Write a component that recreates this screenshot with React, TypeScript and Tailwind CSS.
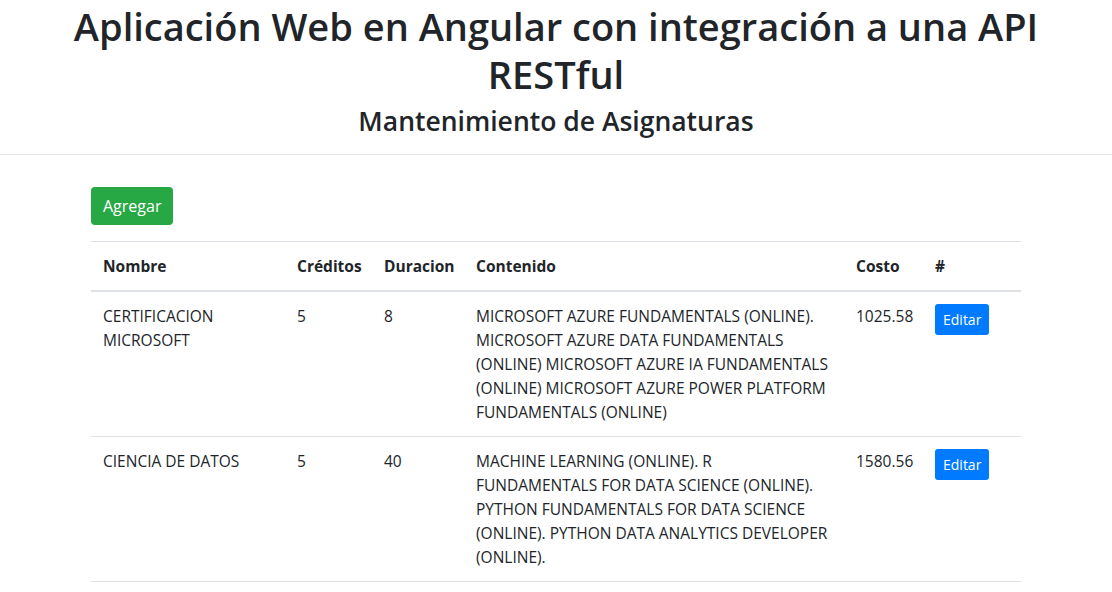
const rows = [
  {
    nombre: "CERTIFICACION MICROSOFT",
    creditos: 5,
    duracion: 8,
    contenido:
      "MICROSOFT AZURE FUNDAMENTALS (ONLINE). MICROSOFT AZURE DATA FUNDAMENTALS (ONLINE) MICROSOFT AZURE IA FUNDAMENTALS (ONLINE) MICROSOFT AZURE POWER PLATFORM FUNDAMENTALS (ONLINE)",
    costo: "1025.58",
  },
  {
    nombre: "CIENCIA DE DATOS",
    creditos: 5,
    duracion: 40,
    contenido:
      "MACHINE LEARNING (ONLINE). R FUNDAMENTALS FOR DATA SCIENCE (ONLINE). PYTHON FUNDAMENTALS FOR DATA SCIENCE (ONLINE). PYTHON DATA ANALYTICS DEVELOPER (ONLINE).",
    costo: "1580.56",
  },
];

const th = "px-3 py-3 text-left font-bold align-bottom";
const td = "px-3 py-3 align-top";

export default function App() {
  return (
    <div className="min-h-screen bg-white text-[#212529] [font-family:'Open_Sans',sans-serif] text-[15.5px] leading-6">
      <header className="border-b border-[#e5e5e5] pt-0.5 pb-4 text-center">
        <h1 className="text-[38px] font-semibold leading-[48px] px-2">
          Aplicación Web en Angular con integración a una API RESTful
        </h1>
        <h3 className="text-[26.5px] font-semibold leading-[34px] mt-1.5">Mantenimiento de Asignaturas</h3>
      </header>

      <main className="max-w-[960px] mx-auto px-[15px] pt-8">
        <button
          className="bg-[#28a745] text-white rounded px-3 h-[38px] text-base mb-4"
          type="button"
        >
          Agregar
        </button>

        <table className="w-full table-fixed border-collapse">
          <colgroup>
            <col className="w-[194px]" />
            <col className="w-[87px]" />
            <col className="w-[92px]" />
            <col className="w-[380px]" />
            <col className="w-[79px]" />
            <col />
          </colgroup>
          <thead>
            <tr className="border-t border-[#dee2e6] border-b-2">
              <th className={th}>Nombre</th>
              <th className={th}>Créditos</th>
              <th className={th}>Duracion</th>
              <th className={th}>Contenido</th>
              <th className={th}>Costo</th>
              <th className={th}>#</th>
            </tr>
          </thead>
          <tbody>
            {rows.map((r) => (
              <tr key={r.nombre} className="border-t border-[#dee2e6] last:border-b">
                <td className={td}>{r.nombre}</td>
                <td className={td}>{r.creditos}</td>
                <td className={td}>{r.duracion}</td>
                <td className={td}>{r.contenido}</td>
                <td className={td}>{r.costo}</td>
                <td className={td}>
                  <button
                    className="bg-[#007bff] text-white rounded-[3px] px-2 h-[31px] text-sm"
                    type="button"
                  >
                    Editar
                  </button>
                </td>
              </tr>
            ))}
          </tbody>
        </table>
      </main>
    </div>
  );
}
